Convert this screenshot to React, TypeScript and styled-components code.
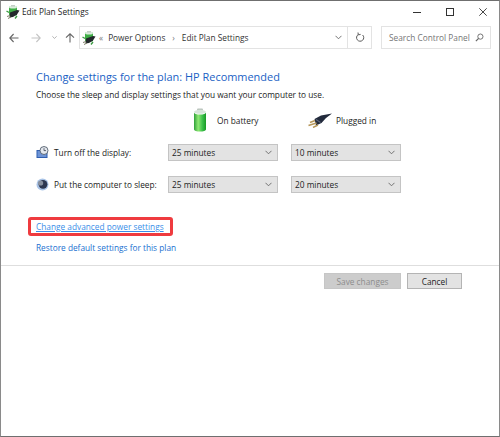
import React from "react";
import styled, { createGlobalStyle } from "styled-components";

const Global = createGlobalStyle`
  html, body { margin: 0; padding: 0; background: #fff; }
  * { box-sizing: border-box; }
`;

const Win = styled.div`
  width: 500px; height: 437px; background: #fff; display: flex; flex-direction: column;
  border-top: 1px solid #6f6f6f; border-bottom: 1px solid #6f6f6f; border-left: 1px solid #8a8a8a; border-right: 1px solid #8a8a8a;
  font-family: "Open Sans", "Noto Sans", sans-serif; font-size: 8.3px; color: #1c1c1c; overflow: hidden;
`;
const TitleBar = styled.div`
  height: 21px; display: flex; align-items: center; padding-left: 5px; flex: none;
`;
const TitleText = styled.div`
  margin-left: 2px; color: #222; flex: 1;
`;
const WinButtons = styled.div`
  display: flex; align-items: center; gap: 25px; padding-right: 12px;
`;
const NavRow = styled.div`
  height: 23px; margin-top: 4px; display: flex; align-items: center; padding-left: 8px; flex: none;
`;
const NavIcons = styled.div`
  display: flex; align-items: center; width: 70px; flex: none;
  svg { flex: none; }
`;
const NavGap = styled.span`
  width: ${(p: { $w: number }) => p.$w}px; flex: none;
`;
const AddressBar = styled.div`
  width: 293px; height: 23px; border: 1px solid #e3e3e3; display: flex; align-items: center; padding-left: 2px;
`;
const Crumb = styled.span`
  margin-left: ${(p: { $gap: number; $muted?: boolean }) => p.$gap}px;
  color: ${(p: { $gap: number; $muted?: boolean }) => (p.$muted ? "#777" : "#333")};
  white-space: nowrap;
`;
const Spacer = styled.div`flex: 1;`;
const AddrSegment = styled.div`
  width: 24px; height: 21px; display: flex; align-items: center; justify-content: center;
  border-left: 1px solid #e3e3e3;
`;
const AddrDrop = styled.div`
  width: 18px; display: flex; align-items: center; justify-content: center;
`;
const SearchBox = styled.div`
  margin-left: 9px; width: 110px; height: 23px; border: 1px solid #e3e3e3; display: flex; align-items: center;
  padding: 0 6px 0 7px; color: #767676; justify-content: space-between; white-space: nowrap;
`;
const Content = styled.div`
  padding: 20px 0 0 35px; flex: none; height: 217px;
  display: flex; flex-direction: column;
`;
const Heading = styled.div`
  font-size: 10.95px; line-height: 15px; color: #1a5fc4; white-space: nowrap;
`;
const Sub = styled.div`
  margin-top: 5px; line-height: 12px; color: #1c1c1c; white-space: nowrap;
`;
const PowerRow = styled.div`
  display: flex; align-items: center; height: 24px; margin-top: 7px;
`;
const HeadCell = styled.div`
  width: 115px; display: flex; align-items: center; flex: none; gap: ${(p: { $gap: number }) => p.$gap}px;
`;
const HeadFirst = styled.div`
  width: 157px; flex: none;
`;
const SettingRow = styled.div`
  display: flex; align-items: center; height: 17px; margin-top: ${(p: { $mt: number }) => p.$mt}px;
`;
const LabelCell = styled.div`
  width: 132px; flex: none; display: flex; align-items: center; gap: 5px; white-space: nowrap; color: #222;
`;
const SelectBox = styled.div`
  width: 110px; height: 17px; flex: none; margin-right: 13px; background: #e3e3e3; border: 1px solid #c4c4c4;
  display: flex; align-items: center; justify-content: space-between; padding: 0 5px 0 3px; color: #1c1c1c;
`;
const LinksBlock = styled.div`
  margin-top: 27px; display: flex; flex-direction: column; align-items: flex-start;
`;
const LinkWrap = styled.div`
  position: relative; line-height: 13px;
`;
const AdvLink = styled.a`
  color: #3a8ee8; text-decoration: underline; white-space: nowrap;
`;
const Highlight = styled.div`
  position: absolute; left: -8px; top: -3px; width: 145px; height: 19px; border: 3px solid #ef3b3f; border-radius: 3px;
`;
const PlainLink = styled.a`
  margin-top: 8px; line-height: 13px; color: #1a6fd0; white-space: nowrap;
`;
const Footer = styled.div`
  border-top: 1px solid #dedede; display: flex; justify-content: flex-end; padding: 7px 37px 0 0; gap: 6px; flex: 1;
  margin-top: -1px;
`;
const SaveBtn = styled.div`
  width: 77px; height: 16px; background: #cccccc; border: 1px solid #c6c6c6; color: #8c8c8c;
  display: flex; align-items: center; justify-content: center;
`;
const CancelBtn = styled.div`
  width: 55px; height: 16px; background: #e3e3e3; border: 1px solid #b4b4b4; color: #222;
  display: flex; align-items: center; justify-content: center;
`;

const PowerIcon = () => (
  <svg width="14" height="14" viewBox="0 0 14 14">
    <rect x="3" y="1.5" width="8" height="9" rx="1" fill="#3fae46" />
    <ellipse cx="7" cy="2" rx="4" ry="1.6" fill="#dbeedd" />
    <rect x="5" y="0" width="4" height="1.6" fill="#c4cfc6" />
    <path d="M4 7.5 L11 5 L13.5 5.5 L11 9.5 L7 12 L3.5 12.5Z" fill="#23282c" />
    <path d="M0.5 6 L3 7.5 M11 11 L9 13.5" stroke="#3d9a44" strokeWidth="1.4" />
    <path d="M1 11.5 L4 10.5 M2 13.5 L5 12" stroke="#7d7d66" strokeWidth="1" />
  </svg>
);
const Arrow = ({ dir, color }: { dir: "l" | "r" | "u"; color: string }) => {
  const r = dir === "l" ? 0 : dir === "r" ? 180 : 90;
  return (
    <svg width="10" height="10" viewBox="0 0 10 10" style={{ transform: `rotate(${r}deg)` }}>
      <path d="M0.8 5 H9.5 M4.6 1 L0.8 5 L4.6 9" fill="none" stroke={color} strokeWidth="1.1" />
    </svg>
  );
};
const Chevron = ({ color = "#555", w = 7 }: { color?: string; w?: number }) => (
  <svg width={w} height="5" viewBox="0 0 7 5">
    <path d="M0.5 0.8 L3.5 3.8 L6.5 0.8" fill="none" stroke={color} strokeWidth="0.9" />
  </svg>
);
const Refresh = () => (
  <svg width="10" height="11" viewBox="0 0 10 11">
    <path d="M7.6 3 A3.6 3.6 0 1 1 3.2 2.6" fill="none" stroke="#5a5a5a" strokeWidth="1" />
    <path d="M3 0.5 L3.3 2.9 L5.6 2.4" fill="none" stroke="#5a5a5a" strokeWidth="1" />
  </svg>
);
const SearchIcon = () => (
  <svg width="9" height="9" viewBox="0 0 10 10">
    <circle cx="6" cy="4" r="2.9" fill="none" stroke="#666" strokeWidth="1" />
    <path d="M4 6 L1 9" stroke="#666" strokeWidth="1.4" />
  </svg>
);
const Battery = () => (
  <svg width="14" height="24" viewBox="0 0 14 24">
    <defs>
      <linearGradient id="bat" x1="0" x2="1" y1="0" y2="0">
        <stop offset="0" stopColor="#2fa03a" />
        <stop offset="0.35" stopColor="#8fe873" />
        <stop offset="0.7" stopColor="#3cc04a" />
        <stop offset="1" stopColor="#169a24" />
      </linearGradient>
    </defs>
    <rect x="4" y="0.5" width="6" height="3" rx="1" fill="#b9c4bc" />
    <ellipse cx="7" cy="3.8" rx="6" ry="2" fill="#d7e4da" />
    <path d="M1 4.5 V21.5 A6 2 0 0 0 13 21.5 V4.5 A6 2 0 0 1 1 4.5Z" fill="url(#bat)" />
  </svg>
);
const Plug = () => (
  <svg width="24" height="15" viewBox="0 0 24 15">
    <path d="M6.5 6 L13 2.5 L24 0.5 L18 5 L13.5 10 L8 12.5Z" fill="#222a3c" />
    <path d="M8 6.5 L12.5 9.5" stroke="#5c657a" strokeWidth="1.2" />
    <path d="M7 7.5 L2 9.5 M8.5 10 L0.5 12.5 M10 12 L5 14.5" stroke="#b7985c" strokeWidth="1.5" />
  </svg>
);
const DisplayIcon = () => (
  <svg width="13" height="13" viewBox="0 0 13 13">
    <rect x="0.5" y="4" width="11" height="8" fill="#2f5fb0" />
    <rect x="1.5" y="5" width="9" height="6" fill="#6d93d6" />
    <circle cx="8" cy="4.5" r="4" fill="#e4e8ee" stroke="#55606e" strokeWidth="0.9" />
    <path d="M8 2.2 V4.6 H10" fill="none" stroke="#3a4250" strokeWidth="0.8" />
  </svg>
);
const SleepIcon = () => (
  <svg width="13" height="13" viewBox="0 0 13 13">
    <circle cx="6.5" cy="6.5" r="6" fill="#a9c3e6" />
    <circle cx="7" cy="6.3" r="4.4" fill="#2d3750" />
    <circle cx="4.6" cy="5" r="2.6" fill="#87909f" />
  </svg>
);

const PowerSelect = ({ value }: { value: string }) => (
  <SelectBox>
    <span>{value}</span>
    <Chevron color="#666" />
  </SelectBox>
);

export default function App() {
  return (
    <Win>
      <Global />
      <TitleBar>
        <PowerIcon />
        <TitleText>Edit Plan Settings</TitleText>
        <WinButtons>
          <svg width="8" height="10" viewBox="0 0 8 10"><path d="M0 5.5 H8" stroke="#333" strokeWidth="1" /></svg>
          <svg width="8" height="8" viewBox="0 0 8 8"><rect x="0.5" y="0.5" width="7" height="7" fill="none" stroke="#333" strokeWidth="1" /></svg>
          <svg width="8" height="8" viewBox="0 0 8 8"><path d="M0.3 0.3 L7.7 7.7 M7.7 0.3 L0.3 7.7" stroke="#333" strokeWidth="0.9" /></svg>
        </WinButtons>
      </TitleBar>
      <NavRow>
        <NavIcons>
          <Arrow dir="l" color="#666" />
          <NavGap $w={12} />
          <Arrow dir="r" color="#c4c4c4" />
          <NavGap $w={11} />
          <Chevron color="#8a8a8a" w={5} />
          <NavGap $w={8} />
          <Arrow dir="u" color="#666" />
        </NavIcons>
        <AddressBar>
          <PowerIcon />
          <Crumb $gap={3} $muted>&laquo;</Crumb>
          <Crumb $gap={5}>Power Options</Crumb>
          <Crumb $gap={7} $muted>&rsaquo;</Crumb>
          <Crumb $gap={7}>Edit Plan Settings</Crumb>
          <Spacer />
          <AddrDrop><Chevron color="#666" /></AddrDrop>
          <AddrSegment><Refresh /></AddrSegment>
        </AddressBar>
        <SearchBox>
          <span>Search Control Panel</span>
          <SearchIcon />
        </SearchBox>
      </NavRow>
      <Content>
        <Heading>Change settings for the plan: HP Recommended</Heading>
        <Sub>Choose the sleep and display settings that you want your computer to use.</Sub>
        <PowerRow>
          <HeadFirst />
          <HeadCell $gap={10}><Battery /><span>On battery</span></HeadCell>
          <HeadCell $gap={4}><Plug /><span>Plugged in</span></HeadCell>
        </PowerRow>
        <SettingRow $mt={12}>
          <LabelCell><DisplayIcon />Turn off the display:</LabelCell>
          <PowerSelect value="25 minutes" />
          <PowerSelect value="10 minutes" />
        </SettingRow>
        <SettingRow $mt={15}>
          <LabelCell><SleepIcon />Put the computer to sleep:</LabelCell>
          <PowerSelect value="25 minutes" />
          <PowerSelect value="20 minutes" />
        </SettingRow>
        <LinksBlock>
          <LinkWrap>
            <AdvLink>Change advanced power settings</AdvLink>
            <Highlight />
          </LinkWrap>
          <PlainLink>Restore default settings for this plan</PlainLink>
        </LinksBlock>
      </Content>
      <Footer>
        <SaveBtn>Save changes</SaveBtn>
        <CancelBtn>Cancel</CancelBtn>
      </Footer>
    </Win>
  );
}
